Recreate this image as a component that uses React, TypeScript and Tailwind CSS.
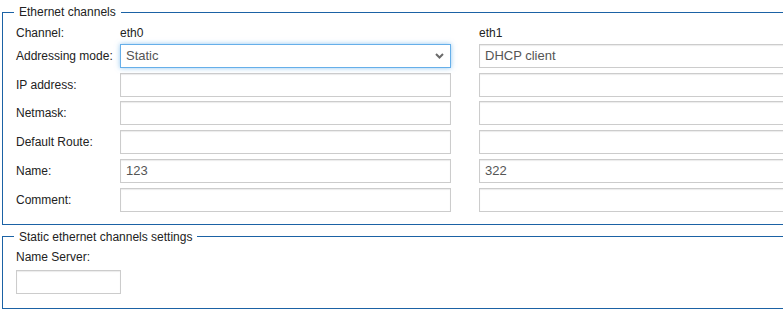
import { useState } from 'react'

const inputCls =
  'h-[24px] w-full bg-white border border-[#cccccc] shadow-[inset_0_1px_1px_rgba(0,0,0,0.08)] px-[5px] text-[13px] text-[#555] outline-none'

function Field({ value }: { value?: string }) {
  const [v, setV] = useState(value ?? '')
  return <input value={v} onChange={(e) => setV(e.target.value)} className={inputCls} />
}

const rows: { label: string; a: string; b: string }[] = [
  { label: 'IP address:', a: '', b: '' },
  { label: 'Netmask:', a: '', b: '' },
  { label: 'Default Route:', a: '', b: '' },
  { label: 'Name:', a: '123', b: '322' },
  { label: 'Comment:', a: '', b: '' },
]

export default function App() {
  const [mode, setMode] = useState('Static')

  return (
    <div className="w-full overflow-hidden bg-white font-['Liberation_Sans',Arial,sans-serif] text-[12px] text-[#222]">
      <fieldset className="mx-[2px] w-[840px] border border-[#1b62a5] pl-[13px] pb-[12px]">
        <legend className="ml-[-2px] px-[5px] leading-[24px]">Ethernet channels</legend>
        <div className="grid grid-cols-[104px_331px_359px] gap-y-[4.8px]">
          <div className="h-[15px] leading-[19px]">Channel:</div>
          <div className="h-[15px] leading-[19px]">eth0</div>
          <div className="h-[15px] pl-[28px] leading-[19px]">eth1</div>

          <div className="flex h-[24px] items-center">Addressing mode:</div>
          <div className="relative h-[24px]">
            <select
              value={mode}
              onChange={(e) => setMode(e.target.value)}
              className="h-[24px] w-full appearance-none bg-white border border-[#66afe9] shadow-[0_0_5px_rgba(102,175,233,0.7)] px-[5px] text-[13px] text-[#555] outline-none"
            >
              <option>Static</option>
              <option>DHCP client</option>
            </select>
            <svg
              className="pointer-events-none absolute right-[7px] top-[9px]"
              width="9"
              height="6"
              viewBox="0 0 9 6"
              fill="none"
            >
              <path d="M1 1l3.5 3.5L8 1" stroke="#6b6b6b" strokeWidth="2" />
            </svg>
          </div>
          <div className="pl-[28px]">
            <div className={inputCls + ' flex items-center'}>DHCP client</div>
          </div>

          {rows.map((r) => (
            <div key={r.label} className="contents">
              <div className="flex h-[24px] items-center">{r.label}</div>
              <Field value={r.a} />
              <div className="pl-[28px]">
                <Field value={r.b} />
              </div>
            </div>
          ))}
        </div>
      </fieldset>

      <fieldset className="mx-[2px] w-[840px] border border-[#1b62a5] pl-[13px] pb-[14px]">
        <legend className="ml-[-2px] px-[5px] leading-[24px]">Static ethernet channels settings</legend>
        <div className="h-[16px] leading-[16px]">Name Server:</div>
        <div className="mt-[5px] w-[105px]">
          <Field />
        </div>
      </fieldset>
    </div>
  )
}
